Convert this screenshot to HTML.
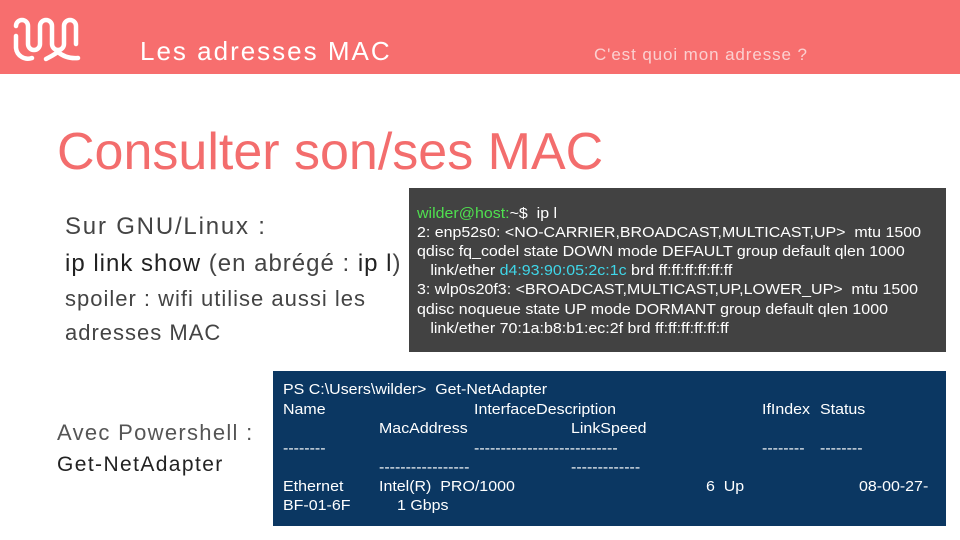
<!DOCTYPE html>
<html><head><meta charset="utf-8"><style>
body{margin:0;width:960px;height:540px;overflow:hidden;background:#fff;font-family:"Liberation Sans",sans-serif;position:relative}
.a{position:absolute;white-space:nowrap}
.t{position:absolute;white-space:nowrap;font-size:15px;color:#fff;transform:scaleX(1.065);transform-origin:0 0;line-height:17px}
</style></head><body>
<div class="a" style="left:0;top:0;width:960px;height:74px;background:#f76e6e"></div>
<svg class="a" style="left:12px;top:14px" width="72" height="52" viewBox="0 0 72 52" fill="none" stroke="#fff" stroke-width="4.5" stroke-linecap="round">
<path d="M4 12 A6 6 0 0 1 16 12 V30 A6 6 0 0 0 28 30 V12 A6 6 0 0 1 40 12 V30 A6 6 0 0 0 52 30 V12 A6 6 0 0 1 64 12 V30"/>
<path d="M4 22 V34 A12 12 0 0 0 20 44"/>
<path d="M34 45 Q40 42 46 38 Q54 45 66 44"/>
</svg>
<div class="a" style="left:140px;top:36px;font-size:26px;color:#fff;letter-spacing:2px">Les adresses MAC</div>
<div class="a" style="left:594px;top:45px;font-size:17px;color:#fbd0d0;letter-spacing:.9px">C'est quoi mon adresse ?</div>
<div class="a" style="left:57px;top:122px;font-size:52px;color:#f36d6d">Consulter son/ses MAC</div>
<div class="a" style="left:65px;top:213px;font-size:24px;color:#444;letter-spacing:1.8px">Sur GNU/Linux :</div>
<div class="a" style="left:65px;top:250px;font-size:24px;color:#222;letter-spacing:1px">ip link show <span style="color:#444">(en abrégé : </span>ip l<span style="color:#444">)</span></div>
<div class="a" style="left:65px;top:286px;font-size:22px;color:#444;letter-spacing:1px">spoiler : wifi utilise aussi les</div>
<div class="a" style="left:65px;top:320px;font-size:22px;color:#444;letter-spacing:1px">adresses MAC</div>
<div class="a" style="left:57px;top:420px;font-size:22px;color:#555;letter-spacing:1.3px">Avec Powershell :</div>
<div class="a" style="left:57px;top:453px;font-size:21px;color:#222;letter-spacing:1.4px">Get-NetAdapter</div>
<div class="a" style="left:409px;top:188px;width:537px;height:164px;background:#424242"></div>
<div class="t" style="left:417px;top:205px"><span style="color:#4fe04f">wilder@host:</span>~$&nbsp; ip l</div>
<div class="t" style="left:417px;top:224px">2: enp52s0: &lt;NO-CARRIER,BROADCAST,MULTICAST,UP&gt;&nbsp; mtu 1500</div>
<div class="t" style="left:417px;top:243px">qdisc fq_codel state DOWN mode DEFAULT group default qlen 1000</div>
<div class="t" style="left:417px;top:262px">&nbsp;&nbsp;&nbsp;link/ether <span style="color:#3fd6e8">d4:93:90:05:2c:1c</span> brd ff:ff:ff:ff:ff:ff</div>
<div class="t" style="left:417px;top:281px">3: wlp0s20f3: &lt;BROADCAST,MULTICAST,UP,LOWER_UP&gt;&nbsp; mtu 1500</div>
<div class="t" style="left:417px;top:301px">qdisc noqueue state UP mode DORMANT group default qlen 1000</div>
<div class="t" style="left:417px;top:320px">&nbsp;&nbsp;&nbsp;link/ether 70:1a:b8:b1:ec:2f brd ff:ff:ff:ff:ff:ff</div>
<div class="a" style="left:273px;top:371px;width:673px;height:155px;background:#0b3762"></div>
<div class="t" style="left:283px;top:381px">PS C:\Users\wilder&gt;&nbsp; Get-NetAdapter</div>
<div class="t" style="left:283px;top:401px">Name</div><div class="t" style="left:474px;top:401px">InterfaceDescription</div><div class="t" style="left:762px;top:401px">IfIndex</div><div class="t" style="left:820px;top:401px">Status</div>
<div class="t" style="left:379px;top:420px">MacAddress</div><div class="t" style="left:571px;top:420px">LinkSpeed</div>
<div class="t" style="left:283px;top:440px">--------</div><div class="t" style="left:474px;top:440px">---------------------------</div><div class="t" style="left:762px;top:440px">--------</div><div class="t" style="left:820px;top:440px">--------</div>
<div class="t" style="left:379px;top:459px">-----------------</div><div class="t" style="left:571px;top:459px">-------------</div>
<div class="t" style="left:283px;top:478px">Ethernet</div><div class="t" style="left:379px;top:478px">Intel(R)&nbsp; PRO/1000</div><div class="t" style="left:706px;top:478px">6&nbsp; Up</div><div class="t" style="left:859px;top:478px">08-00-27-</div>
<div class="t" style="left:283px;top:497px">BF-01-6F</div><div class="t" style="left:397px;top:497px">1 Gbps</div>
</body></html>
